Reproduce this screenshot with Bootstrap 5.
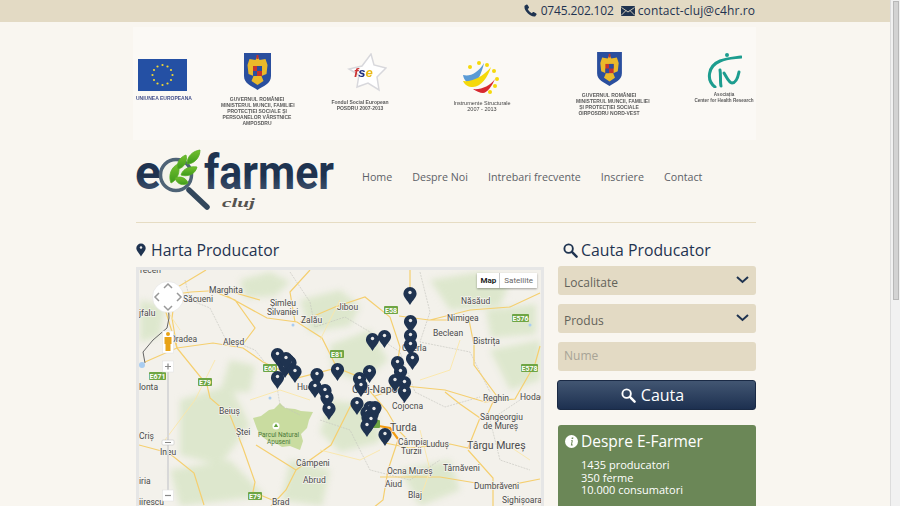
<!DOCTYPE html>
<html lang="ro">
<head>
    <meta charset="UTF-8">
    <meta name="viewport" content="width=device-width, initial-scale=1.0">
    <title>E-Farmer Cluj</title>
    <link href="https://cdn.jsdelivr.net/npm/bootstrap@5.3.0/dist/css/bootstrap.min.css" rel="stylesheet">
    <style>
        body {
            font-family: "Open Sans", sans-serif;
            background-color: #f9f6f0;
            color: #1f3350;
            min-height: 853px;
            padding-right: 10px;
        }

        /* the window scrollbar of the screenshot */
        .scroll-rail {
            position: fixed;
            top: 0;
            right: 0;
            bottom: 0;
            width: 10px;
            padding: 1px 1px 0 2px;
            background: #f1f1f1;
            border-left: 1px solid #dcdcdc;
        }
        .scroll-thumb { height: 299px; background: #d3d3d3; border: 1px solid #b8b8b8; }

        .top-strip {
            height: 22px;
            background-color: #e3dac4;
            font-size: 12px;
            line-height: 21px;
            color: #1f3350;
        }

        .page-wrap { width: 622px; padding-left: 2px; margin: 0 auto; }
        .top-strip .page-wrap { gap: 3px; padding-right: 1px; }
        .top-strip svg { display: block; }
        .top-phone { letter-spacing: -.15px; margin-left: 1px; margin-right: 4px; }
        .top-mail { letter-spacing: .1px; }

        .logo-strip {
            height: 113px;
            margin-top: 5px;
            margin-left: -3px;
            padding: 25px 0 0 3px;
            background-color: #fbf9f5;
            filter: blur(0.25px);
        }
        .logo-item {
            font-family: "Liberation Sans", sans-serif;
            font-size: 5px;
            line-height: 6px;
            font-weight: 700;
            color: #5b5b5b;
            text-align: center;
            white-space: nowrap;
        }
        .logo-item svg { display: block; margin: 0 auto; }
        .logo-eu { width: 52px; padding-top: 7px; }
        .logo-eu svg { margin-bottom: 4px; }
        .logo-eu div { color: #44508c; }
        .logo-gov { width: 72px; margin-left: 33px; padding-top: 1px; }
        .logo-gov svg { margin-bottom: 6px; }
        .logo-fse { width: 58px; margin-left: 38px; padding-top: 1px; }
        .logo-fse svg { margin: 0 0 7px 16px; }
        .logo-is { width: 60px; margin-left: 63px; padding-top: 7px; font-weight: 400; font-size: 5.5px; color: #444; }
        .logo-is svg { margin-bottom: 5px; }
        .logo-gov2 { width: 66px; margin-left: 64px; }
        .logo-gov2 svg { margin-bottom: 6px; }
        .logo-assoc { width: 60px; margin-left: 52px; font-size: 4.6px; }
        .logo-assoc svg { margin-bottom: 4px; }

        .brand-row { height: 83px; border-bottom: 1px solid #e6dcc3; }
        .brand-row svg { display: block; flex-shrink: 0; }
        .brand-row .navbar-nav { gap: 20px; margin-left: 27px; margin-top: 21px; white-space: nowrap; }
        .brand-row.navbar-expand .navbar-nav .nav-link { padding: 0; font-size: 10.7px; line-height: 16px; color: #5d6167; }
        .logo-word { font-family: Roboto, sans-serif; font-weight: 700; font-size: 48px; }
        .logo-city { font-family: "Liberation Serif", serif; font-style: italic; font-weight: 700; font-size: 13px; fill: #55534f; }

        .main-row { margin-top: 16px; gap: 13px; }
        .map-col { width: 408px; flex-shrink: 0; }
        .side-col { width: 199px; padding-left: 1px; }
        .block-title {
            font-size: 15.8px;
            line-height: 22px;
            font-weight: 400;
            color: #1f3350;
            margin: 0;
            gap: 5px;
        }
        .block-title-search { padding-left: 5px; gap: 3px; }
        .map-frame {
            position: relative;
            height: 400px;
            margin-top: 6px;
            border: 3px solid #e6e6e6;
            overflow: hidden;
            background: #f3f1eb;
        }
        .map-frame > svg { display: block; }
        .map-type {
            position: absolute;
            top: 3px;
            right: 4px;
            display: flex;
            font-family: Roboto, sans-serif;
            font-size: 8px;
            line-height: 15px;
            background: #fff;
            box-shadow: 0 1px 2px rgba(0, 0, 0, .35);
            color: #666;
        }
        .map-type span { padding: 0 4px; }
        .map-type span:first-child { width: 23px; padding: 0; text-align: center; font-weight: 700; color: #222; border-right: 1px solid #ccc; }
        .map-label { font-family: Roboto, sans-serif; font-size: 8.5px; fill: #4a4a4a; paint-order: stroke; stroke: #f6f4ef; stroke-width: 1.4px; }
        .map-label-big { font-size: 10.5px; }
        .land-soft { filter: blur(3px); }
        .road { fill: none; stroke: #f5cf6f; stroke-width: 1.2; }
        .road-thin { fill: none; stroke: #fbe6a8; stroke-width: .9; }
        .county { fill: none; stroke: #c2c2bc; stroke-width: .6; stroke-dasharray: 2 1; }
        .shield rect { fill: #6ea544; }
        .shield text { font-family: Roboto, sans-serif; font-size: 7px; font-weight: 700; fill: #fff; text-anchor: middle; }

        .search-form .form-select,
        .search-form .form-control {
            height: 29px;
            border: 0;
            border-radius: 3px;
            padding: 4px 6px 0;
            font-size: 12px;
            color: #63635a;
            background-color: #e3dac4;
        }
        .search-form .form-control { padding: 0 6px 2px; }
        .search-form .form-select {
            background-image: url("data:image/svg+xml,%3Csvg xmlns='http://www.w3.org/2000/svg' viewBox='0 0 13 8'%3E%3Cpath fill='none' stroke='%231f3350' stroke-width='2' d='M1 1l5.500 5 5.500-5'/%3E%3C/svg%3E");
            background-position: right 7px top 10px;
            background-size: 13px 8px;
        }
        .search-form .form-control::placeholder { color: #a7a396; opacity: 1; }
        .search-form { margin-top: 5px; }
        .search-form > * { margin-bottom: 9px; margin-right: 1px; }
        .search-btn {
            height: 30px;
            padding: 0 8px 0 0;
            margin: 1px 0 0 -1px;
            width: 199px;
            gap: 5px;
            font-size: 16px;
            line-height: 26px;
            color: #fff;
            border: 1px solid #1a2a45;
            border-radius: 3px;
            background: linear-gradient(#425672, #1d3050);
        }
        .search-btn:hover { color: #fff; background: linear-gradient(#425672, #1d3050); }
        .about-box {
            margin-top: 15px;
            height: 170px;
            padding: 5px 7px;
            border-radius: 3px 3px 0 0;
            background-color: #6b8757;
            color: #fff;
        }
        .about-box h3 { font-size: 15.5px; line-height: 22px; font-weight: 400; margin: 0; gap: 3px; }
        .about-list { margin: 7px 0 0 16px; font-size: 11px; line-height: 12.500px; }
    </style>
</head>
<body>
    <div class="scroll-rail"><div class="scroll-thumb"></div></div>
    <svg width="0" height="0" class="position-absolute">
        <defs>
            <symbol id="pin" viewBox="0 0 14 18">
                <path fill="#1f3350" d="M7 0a6.600 6.600 0 0 0-6.600 6.600c0 3.900 3.700 6.400 6.600 11.400 2.900-5 6.600-7.500 6.600-11.400A6.600 6.600 0 0 0 7 0z"/>
                <circle cx="7" cy="5.500" r="1.700" fill="#e8e8e8"/>
            </symbol>
            <symbol id="lens" viewBox="0 0 16 16">
                <circle cx="6" cy="6" r="4.500" fill="none" stroke="currentColor" stroke-width="2"/>
                <path d="M9.500 9.500l5 5" stroke="currentColor" stroke-width="2.600" stroke-linecap="round"/>
            </symbol>
            <symbol id="arms" viewBox="0 0 27 37">
                <path fill="#2a4f9e" d="M0 0h27v23c0 8-8 10-13.500 14C8 33 0 31 0 23z"/>
                <path fill="#eab92a" d="M13.500 3l2 4 6-1 2 6-1 9-5 2 2 5-6 4-6-4 2-5-5-2-1-9 2-6 6 1z"/>
                <rect x="9" y="13" width="9" height="10" fill="#c5332b"/>
                <rect x="13" y="13" width="5" height="5" fill="#2a4f9e"/>
                <rect x="9" y="18" width="4" height="5" fill="#2a4f9e"/>
                <path fill="#c5332b" d="M12.500 2h2v4h-2z"/>
            </symbol>
        </defs>
    </svg>

    <div class="top-strip">
        <div class="page-wrap d-flex justify-content-end align-items-center">
            <svg width="13" height="13" viewBox="0 0 13 13"><path fill="#1f3350" d="M2.600.4L.6 1.800c-.7 2.400 1 5.300 3.100 7.500 2.200 2.200 5 3.600 7.400 3.100l1.500-2-.3-.9-2.600-1.500-.8.100-1 1.200c-1.500-.6-3.500-2.600-4.200-4.200l1.200-1 .1-.8L3.500.7z"/></svg>
            <span class="top-phone">0745.202.102</span>
            <svg width="14" height="10" viewBox="0 0 14 10"><rect width="14" height="10" rx="1" fill="#1f3350"/><path fill="none" stroke="#e3dac4" stroke-width=".9" d="M.5 1.500L7 6l6.500-4.500M.5 9L5 4.500M13.500 9L9 4.500"/></svg>
            <span class="top-mail">contact-cluj@c4hr.ro</span>
        </div>
    </div>

    <div class="page-wrap">
        <div class="logo-strip d-flex align-items-start">
            <div class="logo-item logo-eu">
                <svg width="49" height="32" viewBox="0 0 49 32">
                    <rect width="49" height="32" fill="#2450a4"/>
                    <g fill="#f2d733">
                        <circle cx="24.500" cy="6" r="1.100"/><circle cx="29.500" cy="7.500" r="1.100"/><circle cx="33" cy="11" r="1.100"/><circle cx="34.500" cy="16" r="1.100"/><circle cx="33" cy="21" r="1.100"/><circle cx="29.500" cy="24.500" r="1.100"/><circle cx="24.500" cy="26" r="1.100"/><circle cx="19.500" cy="24.500" r="1.100"/><circle cx="16" cy="21" r="1.100"/><circle cx="14.500" cy="16" r="1.100"/><circle cx="16" cy="11" r="1.100"/><circle cx="19.500" cy="7.500" r="1.100"/>
                    </g>
                </svg>
                <div>UNIUNEA EUROPEANA</div>
            </div>
            <div class="logo-item logo-gov">
                <svg width="27" height="37"><use href="#arms"/></svg>
                <div>GUVERNUL ROMÂNIEI<br>MINISTERUL MUNCII, FAMILIEI<br>PROTECȚIEI SOCIALE ȘI<br>PERSOANELOR VÂRSTNICE<br>AMPOSDRU</div>
            </div>
            <div class="logo-item logo-fse">
                <svg width="40" height="39" viewBox="0 0 40 39">
                    <path fill="#fff" stroke="#d8d8dc" stroke-width="1.500" d="M24 1l3 11 12 3-9 9 2 13-11-7-11 4 2-12L2 16l13-3z"/>
                    <text x="7" y="24" font-family="Liberation Sans, sans-serif" font-style="italic" font-weight="700" font-size="13" fill="#c33">f<tspan fill="#1d2f7f">s</tspan><tspan fill="#e9b916">e</tspan></text>
                </svg>
                <div>Fondul Social European<br>POSDRU 2007-2013</div>
            </div>
            <div class="logo-item logo-is">
                <svg width="40" height="36" viewBox="0 0 40 36">
                    <path fill="#5b9bd5" d="M1 16c7 2 15-2 21-12-2 9-6 19-11 21-4 1-9-3-10-9z"/>
                    <path fill="#f5d90a" d="M1 22c9 1 20-4 28-14-3 10-10 20-18 20-5 0-8-2-10-6z"/>
                    <path fill="#d7282f" d="M11 30c8 1 17-3 22-10-3 7-8 14-12 14-3 0-7-2-10-4z"/>
                    <g fill="#f5d90a"><circle cx="8" cy="8" r="2"/><circle cx="17" cy="4" r="2"/><circle cx="25" cy="6" r="2"/><circle cx="32" cy="12" r="2"/><circle cx="35" cy="20" r="2"/><circle cx="33" cy="27" r="2"/><circle cx="28" cy="33" r="2"/></g>
                </svg>
                <div>Instrumente Structurale<br>2007 - 2013</div>
            </div>
            <div class="logo-item logo-gov2">
                <svg width="25" height="34" viewBox="0 0 27 37"><use href="#arms"/></svg>
                <div>GUVERNUL ROMÂNIEI<br>MINISTERUL MUNCII, FAMILIEI<br>ȘI PROTECȚIEI SOCIALE<br>OIRPOSDRU NORD-VEST</div>
            </div>
            <div class="logo-item logo-assoc">
                <svg width="36" height="36" viewBox="0 0 36 36">
                    <g fill="none" stroke="#1d9d8f" stroke-linecap="round">
                        <path stroke-width="3" d="M9 35C0 28 2 14 14 9c7-3 14-3 21-4"/>
                        <path stroke-width="3" d="M14 18c1 5 0 12 1 16"/>
                        <path stroke-width="3" d="M18 21c3 5 5 10 8 10 4 0 6-6 7-11"/>
                    </g>
                    <circle cx="21" cy="3" r="2" fill="#1d9d8f"/>
                </svg>
                <div>Asociația<br>Center for Health Research</div>
            </div>
        </div>

        <nav class="brand-row navbar navbar-expand p-0 pt-2 align-items-start flex-nowrap justify-content-start">
            <svg width="199" height="64" viewBox="136 148 199 64" role="img" aria-label="E-Farmer Cluj">
                <defs>
                    <linearGradient id="word" x1="0" y1="0" x2="0" y2="1"><stop offset=".55" stop-color="#1f3350"/><stop offset="1" stop-color="#50627c"/></linearGradient>
                    <linearGradient id="leaf" x1="0" y1="0" x2="0" y2="1"><stop offset="0" stop-color="#74c02e"/><stop offset="1" stop-color="#3d9a1c"/></linearGradient>
                </defs>
                <text class="logo-word" x="135" y="189" fill="url(#word)">e</text>
                <text class="logo-word" x="204" y="189" fill="url(#word)" textLength="130" lengthAdjust="spacingAndGlyphs">farmer</text>
                <path d="M189 190l18 17" stroke="#33475c" stroke-width="5.500" stroke-linecap="round"/>
                <circle cx="176" cy="175" r="15.500" fill="#f3f3ea" stroke="#4e6376" stroke-width="3.500"/>
                <g fill="url(#leaf)" stroke="#58ad23" stroke-width=".8">
                    <path d="M178 164c-7 3-10 12-7 19 6-3 10-11 7-19z"/>
                    <path d="M186 155c-6 2-10 8-8 14 6-1 10-8 8-14z"/>
                    <path d="M200 150c-7 1-13 6-13 14 7 0 13-6 13-14z"/>
                    <path d="M197 167c-6-1-14 1-16 8 6 2 14 0 16-8z"/>
                    <path d="M175 178c4-2 11-1 13 5-4 3-11 2-13-5z"/>
                </g>
                <text class="logo-city" x="222" y="207" textLength="33" lengthAdjust="spacingAndGlyphs">cluj</text>
            </svg>
            <ul class="navbar-nav flex-row">
                <li class="nav-item"><a class="nav-link" href="#">Home</a></li>
                <li class="nav-item"><a class="nav-link" href="#">Despre Noi</a></li>
                <li class="nav-item"><a class="nav-link" href="#">Intrebari frecvente</a></li>
                <li class="nav-item"><a class="nav-link" href="#">Inscriere</a></li>
                <li class="nav-item"><a class="nav-link" href="#">Contact</a></li>
            </ul>
        </nav>

        <div class="main-row d-flex align-items-start">
            <div class="map-col">
                <h2 class="block-title d-flex align-items-center">
                    <svg width="10" height="14"><use href="#pin"/></svg>
                    Harta Producator
                </h2>
                <div class="map-frame">
                    <svg width="402" height="394" viewBox="139 270 402 394">
                        <rect x="139" y="270" width="402" height="394" fill="#f3f1eb"/>
                        <g class="land-soft" fill="#dde7cd">
                            <path d="M240 280l30-8 20 10-15 14-30 2zM300 300l40-10 20 16-10 20-40 6zM330 345l40-15 18 30-25 22-30-10z"/>
                            <path d="M180 400l50-15 20 40-30 40-40-10zM170 470l60-10 35 36-85 10zM290 460l40 10-8 36-40-6z"/>
                            <path d="M430 280l50-8 30 10-10 24-50 4zM486 310l50-6v30l-45 4zM490 350l50-10v40l-30 10zM400 470l50-10 10 30-40 16z"/>
                            <path d="M330 400l45 6 5 36-40 10-20-20zM140 300l25 6-5 30-20 6zM230 360l25 6-5 26-30 0z"/>
                        </g>
                        <path fill="#c9dca0" d="M253 418l8-2 8-6 5-1 6-6 5 5 10 1 6 2 12 1-4 8-2 8-6 6 2 7-3 9-10-4-8 1-8-5-6-1-8-6-3-6z"/>
                        <path class="county" d="M185 280l5 20 20 8 15 30 30 12 20 25 5 30 20 10M290 272l20 30 5 25 30-10 25 15 30 20 15 40 30 15 35-10M320 420l30 10 20 40 40 10 30-20M420 272l10 40-10 30 50 10 20 40M520 400l-30 20 10 40 30 10"/>
                        <g class="road">
                            <path d="M177 348l36-5 30 5 20 14 34 16 40-10 20 8 18 21 12 14 11 19 8 8"/>
                            <path d="M177 348l30 37 3 13 20 17 13 33 12 34-2 10 24 10"/>
                            <path d="M145 362l32-14 -8-26 -8-26 30-4 34-2 35 10"/>
                            <path d="M177 348l-5-30 4-30 30-18"/>
                            <path d="M210 290l25 10 20 28 -12 16M227 296l40 22 30 4 25 16 15 30"/>
                            <path d="M295 322l-5-30 20-22M300 322l35-15 30-10 25 20 10 30 -5 30 -8 15"/>
                            <path d="M399 316l30 4 40 0 5 25 0 20 22 30 -8 18M410 294l0-24M430 320l40-10 40-3 30-14"/>
                            <path d="M375 396l30-10 40 4 40 12 30-3 20-35 5-18M445 392l15 12 20 14 -12 30 -18-4-40 4-25-5"/>
                            <path d="M398 440l-10 30-5 30 -10 8M468 450l25 28 0 30M380 477l60 0 60 10 40-8"/>
                            <path d="M139 445l30 8 25 20 10 32M296 470l-10 20 -15 16M296 470l-40-25M296 470l35-25 20-40"/>
                        </g>
                        <path class="road-thin" d="M160 300l20 30M215 360l-20 40 -30 40M250 400l30-10 30 10M320 450l40 10 20-10M420 430l10 40 -10 30M500 440l30 20M460 340l-10 30 -30 10M340 300l-20 40"/>
                        <path fill="none" stroke="#f39c12" stroke-width="2.200" d="M373 425l17 3 8 11"/>
                        <path fill="none" stroke="#666" stroke-width="1" d="M168 300l1 18-2 10-14 12-10 12 2 11"/>
                        <g fill="#a9cdf0"><circle cx="293" cy="325" r="1.500"/><circle cx="270" cy="398" r="1.500"/><circle cx="530" cy="325" r="1.500"/><circle cx="142" cy="365" r="3"/></g>

                        <g class="map-label">
                            <text x="140" y="273">recen</text><text x="209" y="293">Marghita</text><text x="183" y="302">Săcueni</text><text x="139" y="316">jfalu</text>
                            <text x="270" y="306">Șimleu</text><text x="267" y="315">Silvaniei</text><text x="301" y="323">Zalău</text><text x="337" y="310">Jibou</text>
                            <text x="170" y="342">Oradea</text><text x="223" y="345">Aleșd</text><text x="139" y="390">lonta</text><text x="219" y="414">Beiuș</text><text x="236" y="435">Ștei</text>
                            <text x="139" y="439">Criș</text><text x="160" y="455">Ineu</text><text x="296" y="466">Câmpeni</text><text x="303" y="483">Abrud</text><text x="272" y="505">Brad</text><text x="139" y="505">iirescu</text><text x="139" y="484">iria</text>
                            <text x="297" y="390">Huedin</text><text x="461" y="304">Năsăud</text><text x="447" y="321">Nimigea</text><text x="433" y="336">Beclean</text><text x="473" y="344">Bistrița</text><text x="402" y="351">Gherla</text>
                            <text class="map-label-big" x="352" y="393">Cluj-Napoca</text><text x="392" y="409">Cojocna</text><text class="map-label-big" x="390" y="431">Turda</text><text x="398" y="445">Câmpia</text><text x="401" y="454">Turzii</text><text x="426" y="447">Luduș</text>
                            <text class="map-label-big" x="467" y="449">Târgu Mureș</text><text x="483" y="401">Reghin</text><text x="520" y="400">Hodac</text><text x="480" y="420">Sângeorgiu</text><text x="483" y="429">de Mureș</text>
                            <text x="387" y="474">Ocna Mureș</text><text x="385" y="487">Aiud</text><text x="408" y="498">Blaj</text><text x="443" y="471">Târnăveni</text><text x="474" y="489">Dumbrăveni</text><text x="502" y="503">Sighișoara</text>
                        </g>
                        <text x="258" y="437" font-family="Roboto, sans-serif" font-size="6.500" fill="#4d7a3a">Parcul Natural</text>
                        <text x="267" y="444" font-family="Roboto, sans-serif" font-size="6.500" fill="#4d7a3a">Apuseni</text>
                        <circle cx="276" cy="426" r="3.500" fill="#fff"/><path d="M276 423.500l2.200 3.500h-4.400z" fill="#5f9e3a"/>

                        <g class="shield">
                            <g transform="translate(149 372)"><rect width="17" height="8" rx="1"/><text x="8.500" y="6.500">E671</text></g>
                            <g transform="translate(198 378)"><rect width="14" height="8" rx="1"/><text x="7" y="6.500">E79</text></g>
                            <g transform="translate(263 364)"><rect width="14" height="8" rx="1"/><text x="7" y="6.500">E60</text></g>
                            <g transform="translate(330 350)"><rect width="14" height="8" rx="1"/><text x="7" y="6.500">E81</text></g>
                            <g transform="translate(384 306)"><rect width="14" height="8" rx="1"/><text x="7" y="6.500">E58</text></g>
                            <g transform="translate(512 314)"><rect width="17" height="8" rx="1"/><text x="8.500" y="6.500">E576</text></g>
                            <g transform="translate(521 364)"><rect width="17" height="8" rx="1"/><text x="8.500" y="6.500">E578</text></g>
                            <g transform="translate(370 420)"><rect width="10" height="8" rx="1"/></g>
                            <g transform="translate(248 492)"><rect width="14" height="8" rx="1"/><text x="7" y="6.500">E79</text></g>
                        </g>

                        <g id="pins">
                            <use href="#pin" x="270.500" y="348" width="14" height="18"/><use href="#pin" x="276" y="355" width="14" height="18"/><use href="#pin" x="281" y="354" width="14" height="18"/><use href="#pin" x="278" y="360" width="14" height="18"/><use href="#pin" x="283" y="356" width="14" height="18"/><use href="#pin" x="279" y="352" width="14" height="18"/><use href="#pin" x="288" y="365" width="14" height="18"/><use href="#pin" x="270.500" y="371" width="14" height="18"/>
                            <use href="#pin" x="310" y="368" width="14" height="18"/><use href="#pin" x="330.500" y="363" width="14" height="18"/><use href="#pin" x="308" y="380" width="14" height="18"/><use href="#pin" x="318" y="384" width="14" height="18"/><use href="#pin" x="320" y="391" width="14" height="18"/><use href="#pin" x="322" y="402" width="14" height="18"/>
                            <use href="#pin" x="403" y="287" width="14" height="18"/><use href="#pin" x="403.500" y="315" width="14" height="18"/><use href="#pin" x="403.500" y="329" width="14" height="18"/><use href="#pin" x="403.500" y="338" width="14" height="18"/><use href="#pin" x="405.500" y="352" width="14" height="18"/>
                            <use href="#pin" x="365.500" y="333" width="14" height="18"/><use href="#pin" x="377.500" y="330" width="14" height="18"/><use href="#pin" x="390.500" y="356" width="14" height="18"/><use href="#pin" x="393.500" y="365" width="14" height="18"/><use href="#pin" x="388" y="374" width="14" height="18"/><use href="#pin" x="397.500" y="376" width="14" height="18"/><use href="#pin" x="397.500" y="385" width="14" height="18"/>
                            <use href="#pin" x="362.500" y="365" width="14" height="18"/><use href="#pin" x="352.500" y="372" width="14" height="18"/><use href="#pin" x="354" y="379" width="14" height="18"/><use href="#pin" x="350" y="397" width="14" height="18"/>
                            <use href="#pin" x="368" y="401" width="14" height="18"/><use href="#pin" x="363" y="401" width="14" height="18"/><use href="#pin" x="360" y="406" width="14" height="18"/><use href="#pin" x="365" y="408" width="14" height="18"/><use href="#pin" x="361" y="411" width="14" height="18"/><use href="#pin" x="367" y="403" width="14" height="18"/><use href="#pin" x="364" y="413" width="14" height="18"/><use href="#pin" x="360" y="419" width="14" height="18"/><use href="#pin" x="378" y="428" width="14" height="18"/>
                        </g>

                        <circle cx="168" cy="297" r="15.500" fill="#fff" stroke="#ddd" stroke-width=".5"/>
                        <path fill="none" stroke="#999" stroke-width="1.500" d="M164 288l4-4 4 4M164 306l4 4 4-4M159 293l-4 4 4 4M177 293l4 4-4 4"/>
                        <rect x="162.500" y="331" width="11" height="22" fill="#fff" stroke="#ddd" stroke-width=".5"/>
                        <path fill="#e8a317" d="M168 332a2 2 0 1 1 0 4 2 2 0 0 1 0-4zm-3.500 5h7v7h-1v7h-5v-7h-1z"/>
                        <path stroke="#d8d8d8" stroke-width="2" d="M168 370v120"/>
                        <rect x="162.500" y="361" width="11" height="11" fill="#fff" stroke="#ddd" stroke-width=".5"/>
                        <path stroke="#888" stroke-width="1.200" d="M165 366.500h6M168 363.500v6"/>
                        <rect x="162" y="440" width="12" height="5" rx="1" fill="#fff" stroke="#bbb" stroke-width=".5"/>
                        <path stroke="#888" d="M165 442.500h6"/>
                        <rect x="162.500" y="490" width="11" height="11" fill="#fff" stroke="#ddd" stroke-width=".5"/>
                        <path stroke="#888" stroke-width="1.200" d="M165 495.500h6"/>
                    </svg>
                    <div class="map-type"><span>Map</span><span>Satellite</span></div>
                </div>
            </div>

            <div class="side-col">
                <h2 class="block-title block-title-search d-flex align-items-center">
                    <svg width="15" height="15"><use href="#lens"/></svg>
                    Cauta Producator
                </h2>
                <form class="search-form">
                    <select class="form-select"><option>Localitate</option></select>
                    <select class="form-select"><option>Produs</option></select>
                    <input type="text" class="form-control" placeholder="Nume">
                    <button type="button" class="btn search-btn d-flex align-items-center justify-content-center">
                        <svg width="15" height="15"><use href="#lens"/></svg>
                        Cauta
                    </button>
                </form>
                <div class="about-box">
                    <h3 class="d-flex align-items-center">
                        <svg width="13" height="13" viewBox="0 0 13 13"><circle cx="6.500" cy="6.500" r="6.500" fill="#fff"/><path fill="#6b8757" d="M6.800 2.500h1.600l-.3 1.600H6.500zM6.200 5.200h1.700l-.9 4.200h.9l-.2 1H5.800l.9-4.300h-.7z"/></svg>
                        Despre E-Farmer
                    </h3>
                    <div class="about-list">1435 producatori<br>350 ferme<br>10.000 consumatori</div>
                </div>
            </div>
        </div>
    </div>
</body>
</html>
